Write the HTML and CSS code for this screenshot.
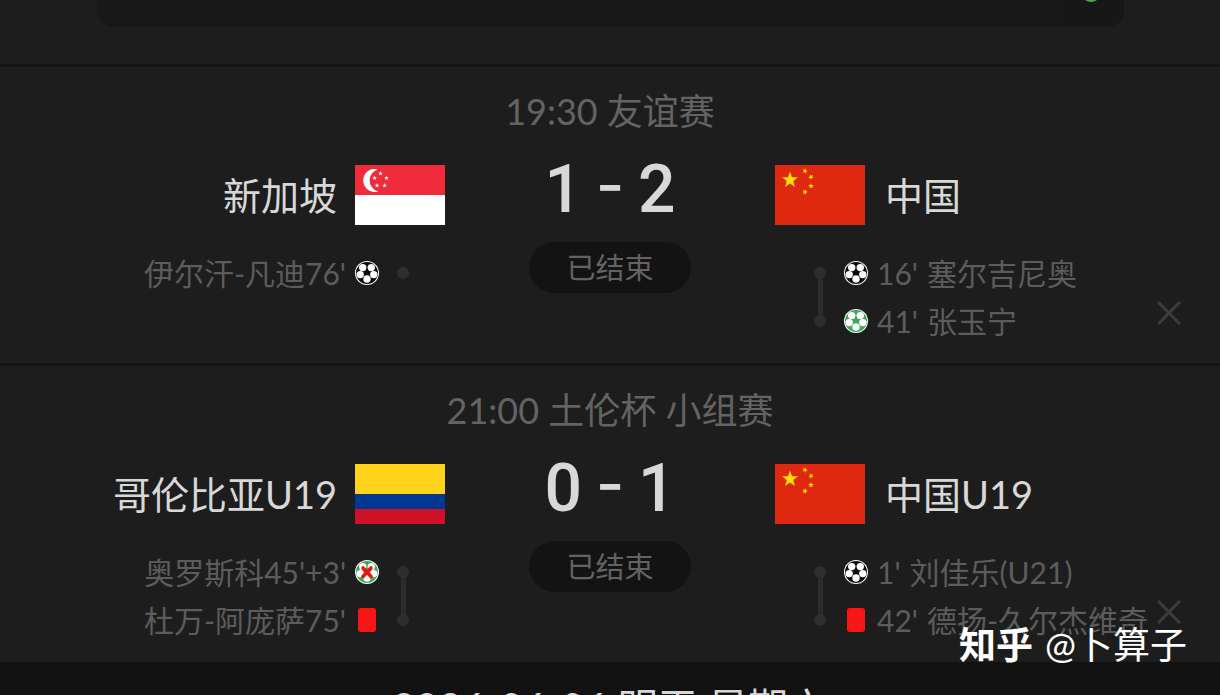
FILE: index.html
```html
<!DOCTYPE html>
<html lang="zh-CN">
<head>
<meta charset="utf-8">
<title>赛程</title>
<link rel="stylesheet" href="styles.css">
</head>
<body>
<svg class="defs" aria-hidden="true">
  <symbol id="star" viewBox="-10 -10 20 20"><path d="M0-10 2.35-3.24 9.51-3.09 3.8 1.24 5.88 8.09 0 4-5.88 8.09-3.8 1.24-9.51-3.09-2.35-3.24Z"/></symbol>
  <symbol id="ball" viewBox="0 0 24 24">
    <circle cx="12" cy="12" r="12" fill="#fff"/>
    <circle cx="12" cy="12" r="11" fill="currentColor"/>
    <g fill="#fff">
      <circle cx="7.700" cy="6.600" r="3.700"/>
      <circle cx="16.300" cy="6.600" r="3.700"/>
      <circle cx="5.200" cy="13.600" r="3.700"/>
      <circle cx="18.800" cy="13.600" r="3.700"/>
      <circle cx="12" cy="18" r="3.700"/>
    </g>
  </symbol>
  <symbol id="china" viewBox="0 0 90 60">
    <path fill="#de2910" d="M0 0h90v60H0z"/>
    <g fill="#ffde00">
      <use href="#star" x="6.5" y="6.5" width="17" height="17"/>
      <use href="#star" x="27" y="3" width="6" height="6" transform="rotate(23 30 6)"/>
      <use href="#star" x="33" y="9" width="6" height="6" transform="rotate(46 36 12)"/>
      <use href="#star" x="33" y="18" width="6" height="6" transform="rotate(70 36 21)"/>
      <use href="#star" x="27" y="24" width="6" height="6" transform="rotate(20 30 27)"/>
    </g>
  </symbol>
</svg>

<div class="top">
  <div class="bar"></div>
  <button class="bar-button" type="button" aria-label="展开"><svg viewBox="0 0 64 27" width="64" height="27"><circle cx="31" cy="-8" r="10" fill="#3fa757"/></svg></button>
</div>

<main>
  <section class="match">
    <h2 class="title">19:30 友谊赛</h2>
    <div class="board">
      <div class="side home">
        <div class="team"><span>新加坡</span>
          <svg class="flag" viewBox="0 0 90 60" role="img" aria-label="新加坡国旗">
            <path fill="#fff" d="M0 0h90v60H0z"/><path fill="#ef2b3c" d="M0 0h90v30H0z"/>
            <path fill="#fff" d="M23 4.4A11.5 11.5 0 1 0 23 26.4 11.4 11.4 0 0 1 23 4.4Z"/>
            <g fill="#fff">
              <use href="#star" x="23" y="6" width="5" height="5"/><use href="#star" x="17" y="10.5" width="5" height="5"/><use href="#star" x="29" y="10.5" width="5" height="5"/><use href="#star" x="19.5" y="18" width="5" height="5"/><use href="#star" x="27" y="18" width="5" height="5"/>
            </g>
          </svg>
        </div>
        <div class="events">
          <ul class="list">
            <li><span>伊尔汗-凡迪76'</span><svg class="icon"><use href="#ball"/></svg></li>
          </ul>
          <div class="track"><i></i></div>
        </div>
      </div>
      <div class="center">
        <div class="score"><b>1</b><b class="dash">-</b><b>2</b></div>
        <div class="status">已结束</div>
      </div>
      <div class="side away">
        <div class="team"><svg class="flag" role="img" aria-label="中国国旗"><use href="#china"/></svg><span>中国</span></div>
        <div class="events">
          <div class="track"><i></i><i></i></div>
          <ul class="list">
            <li><svg class="icon"><use href="#ball"/></svg><span>16'</span><span>塞尔吉尼奥</span></li>
            <li><svg class="icon green"><use href="#ball"/></svg><span>41'</span><span>张玉宁</span></li>
          </ul>
        </div>
      </div>
    </div>
    <button class="close" type="button" aria-label="关闭"><svg viewBox="0 0 24 24"><path d="M1 1 23 23M23 1 1 23"/></svg></button>
  </section>

  <section class="match">
    <h2 class="title">21:00 土伦杯 小组赛</h2>
    <div class="board">
      <div class="side home">
        <div class="team"><span>哥伦比亚U19</span>
          <svg class="flag" viewBox="0 0 90 60" role="img" aria-label="哥伦比亚国旗"><path fill="#ffd31c" d="M0 0h90v30H0z"/><path fill="#003893" d="M0 30h90v15H0z"/><path fill="#ce1126" d="M0 45h90v15H0z"/></svg>
        </div>
        <div class="events">
          <ul class="list">
            <li><span>奥罗斯科45'+3'</span><svg class="icon green" viewBox="0 0 24 24"><use href="#ball"/><path d="M8 8 16 16.5M16 8 8 16.5" stroke="#e01a12" stroke-width="3.6" stroke-linecap="round"/></svg></li>
            <li><span>杜万-阿庞萨75'</span><svg class="icon" viewBox="0 0 24 24"><rect x="3" width="18" height="24" rx="3" fill="#f61616"/></svg></li>
          </ul>
          <div class="track"><i></i><i></i></div>
        </div>
      </div>
      <div class="center">
        <div class="score"><b>0</b><b class="dash">-</b><b>1</b></div>
        <div class="status">已结束</div>
      </div>
      <div class="side away">
        <div class="team"><svg class="flag" role="img" aria-label="中国国旗"><use href="#china"/></svg><span>中国U19</span></div>
        <div class="events">
          <div class="track"><i></i><i></i></div>
          <ul class="list">
            <li><svg class="icon"><use href="#ball"/></svg><span>1'</span><span>刘佳乐(U21)</span></li>
            <li><svg class="icon" viewBox="0 0 24 24"><rect x="3" width="18" height="24" rx="3" fill="#f61616"/></svg><span>42'</span><span>德扬-久尔杰维奇</span></li>
          </ul>
        </div>
      </div>
    </div>
    <button class="close" type="button" aria-label="关闭"><svg viewBox="0 0 24 24"><path d="M1 1 23 23M23 1 1 23"/></svg></button>
  </section>
</main>

<h2 class="day">2026-06-06 明天 星期六</h2>
<div class="watermark"><strong>知乎</strong><span>@卜算子</span></div>
</body>
</html>
```

FILE: styles.css
```css
* { box-sizing: border-box; }
body {
  margin: 0;
  height: 100vh;
  overflow: hidden;
  position: relative;
  background: #1d1d1d;
  color: #d8d8d8;
  font-family: Lato, "Noto Sans CJK SC", sans-serif;
}
button { padding: 0; border: 0; background: none; }
svg { display: block; }
.defs { position: absolute; width: 0; height: 0; }

.top { display: flex; padding: 0 96px 37px 98px; }
.bar { flex: 1; height: 27px; background: #181818; border-radius: 0 0 0 16px; }
.bar-button { height: 27px; background: #171717; border-radius: 0 0 16px 0; overflow: hidden; }

.match { position: relative; border-top: 3px solid #151515; padding: 20px 0 18px; }
.title {
  margin: 0 0 30px;
  text-align: center;
  font-size: 36px;
  line-height: 48px;
  font-weight: 400;
  color: #636363;
}
.board { display: grid; grid-template-columns: 1fr 330px 1fr; }
.side { min-width: 0; }
.team { display: flex; align-items: center; gap: 20px; height: 60px; font-size: 38px; line-height: 60px; white-space: nowrap; }
.home .team { justify-content: flex-end; gap: 18px; }
.flag { width: 90px; height: 60px; flex: none; }

.events { display: flex; margin-top: 24px; min-height: 96px; align-items: flex-start; }
.home .events { justify-content: flex-end; gap: 18px; padding-right: 36px; }
.away .events { gap: 18px; padding-left: 39px; }
.list { list-style: none; margin: 0; padding: 0; }
.list li {
  display: flex;
  align-items: center;
  gap: 9px;
  height: 48px;
  font-size: 30px;
  line-height: 48px;
  color: #5c5c5c;
  white-space: nowrap;
}
.home .list li { justify-content: flex-end; }
.icon { width: 24px; height: 24px; flex: none; color: #0c0c0c; }
.icon.green { color: #3fa75c; }

.track {
  display: flex;
  flex-direction: column;
  gap: 36px;
  padding: 18px 0;
  background: linear-gradient(#2c2c2c, #2c2c2c) center / 5px calc(100% - 48px) no-repeat;
}
.track i { width: 12px; height: 12px; border-radius: 50%; background: #2e2e2e; }

.score {
  display: grid;
  grid-template-columns: 1fr 24px 1fr;
  gap: 16px;
  font-family: Roboto, sans-serif;
  font-size: 66px;
  line-height: 66px;
  margin-top: -8px;
}
.score b { font-weight: 500; }
.score b:first-child { text-align: right; }
.score .dash { display: flex; justify-content: center; font-family: Inter, sans-serif; font-size: 62px; line-height: 56px; }
.status {
  width: 162px;
  margin: 19px auto 0;
  border-radius: 26px;
  background: #131313;
  color: #636363;
  font-size: 29px;
  line-height: 51px;
  text-align: center;
}
.close { position: absolute; right: 39px; bottom: 38px; width: 24px; height: 24px; }
.close path { fill: none; stroke: #3c3c3c; stroke-width: 3; }

.day {
  margin: 0;
  padding-top: 17px;
  background: #111;
  font-size: 40px;
  line-height: 56px;
  font-weight: 400;
  text-align: center;
}
.watermark {
  position: absolute;
  right: 33px;
  bottom: 24px;
  display: flex;
  gap: 12px;
  color: #fff;
  font-size: 37px;
  line-height: 52px;
}
.watermark strong { font-weight: 700; }
```
